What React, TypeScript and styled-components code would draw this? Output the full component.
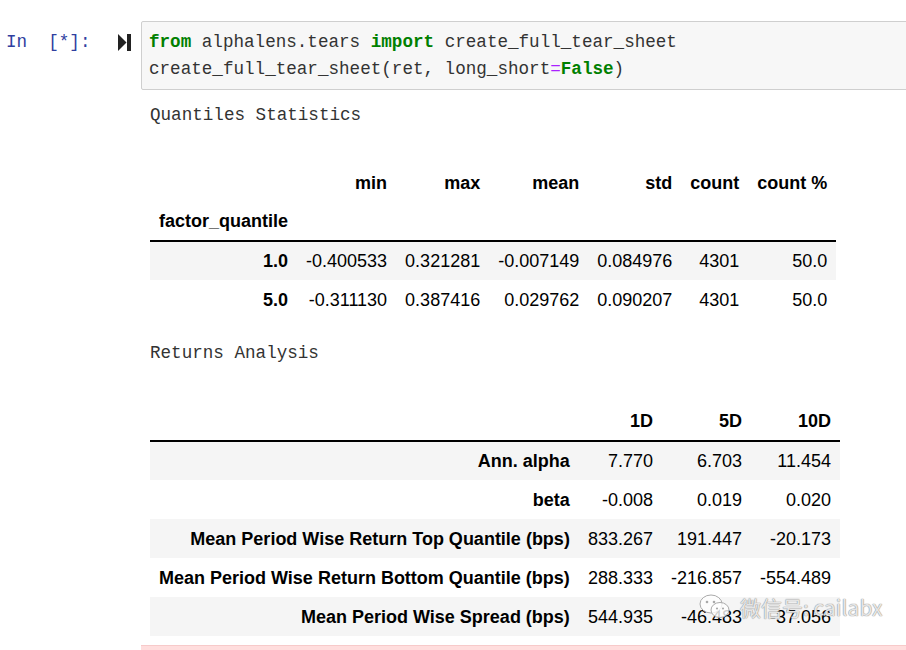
import React from "react";
import styled, { createGlobalStyle } from "styled-components";

const Global = createGlobalStyle`
  html, body { margin: 0; padding: 0; background: #fff; overflow: hidden; }
  body { width: 906px; height: 650px; }
`;

const mono = `"Liberation Mono", "DejaVu Sans Mono", monospace`;
const sans = `"Liberation Sans", Arial, sans-serif`;

const Notebook = styled.div`
  padding-top: 21px;
  display: flex;
  width: 906px;
  height: 629px;
  overflow: hidden;
`;

const PromptCol = styled.div`
  width: 141px;
  flex: none;
  box-sizing: border-box;
  padding: 8px 10px 0 6px;
  display: flex;
  justify-content: space-between;
  align-items: flex-start;
`;

const PromptText = styled.span`
  font-family: ${mono};
  font-size: 17.6px;
  line-height: 27px;
  color: #303f9f;
  white-space: pre;
`;

const RunIcon = styled.svg`
  margin-top: 5px;
  display: block;
`;

const InnerCell = styled.div`
  flex: 1;
  display: flex;
  flex-direction: column;
  min-width: 0;
`;

const CodeBox = styled.div`
  width: 790px;
  box-sizing: border-box;
  border: 1px solid #cfcfcf;
  border-radius: 2px;
  background: #f7f7f7;
  padding: 7px 7px 6px 7px;
  font-family: ${mono};
  font-size: 17.6px;
  line-height: 27px;
  color: #333;
  white-space: pre;
`;

const Kw = styled.span`
  color: #008000;
  font-weight: bold;
`;

const Op = styled.span`
  color: #aa22ff;
`;

const Output = styled.div`
  position: relative;
  padding: 12px 0 0 9px;
`;

const Heading = styled.div<{ $gap: number }>`
  font-family: ${mono};
  font-size: 17.6px;
  line-height: 27px;
  color: #333;
  white-space: pre;
  margin-bottom: ${(p) => p.$gap}px;
`;

const Table = styled.table<{ $after?: number }>`
  border-collapse: collapse;
  border-spacing: 0;
  font-family: ${sans};
  font-size: 18px;
  color: #000;
  margin-bottom: ${(p) => p.$after ?? 0}px;

  th, td {
    height: 39px;
    padding: 0 9px;
    text-align: right;
    vertical-align: middle;
    white-space: nowrap;
    box-sizing: border-box;
    line-height: 18px;
  }
  th { font-weight: bold; }
  td { font-weight: normal; }
  thead tr:last-child th { border-bottom: 2px solid #000; }
  tbody tr:nth-child(odd) { background: #f5f5f5; }
`;

const IndexNameCell = styled.th`
  && { text-align: left; }
`;

const ErrBlock = styled.div`
  margin-top: 9px;
  height: 40px;
  background: #fdd;
  border-top: 1px solid #f7caca;
`;

const Watermark = styled.div`
  position: absolute;
  left: 557px;
  top: 504px;
  display: flex;
  align-items: center;
  gap: 8px;
  pointer-events: none;
`;

const WatermarkText = styled.span`
  font-family: "Noto Sans CJK SC", ${sans};
  font-size: 21px;
  line-height: 24px;
  color: rgba(255, 255, 255, 0.8);
  text-shadow: 0 0 1px #8a8a8a, 0 0 1px #8a8a8a;
  white-space: pre;
`;

const quantRows = [
  ["1.0", "-0.400533", "0.321281", "-0.007149", "0.084976", "4301", "50.0"],
  ["5.0", "-0.311130", "0.387416", "0.029762", "0.090207", "4301", "50.0"],
];

const retRows = [
  ["Ann. alpha", "7.770", "6.703", "11.454"],
  ["beta", "-0.008", "0.019", "0.020"],
  ["Mean Period Wise Return Top Quantile (bps)", "833.267", "191.447", "-20.173"],
  ["Mean Period Wise Return Bottom Quantile (bps)", "288.333", "-216.857", "-554.489"],
  ["Mean Period Wise Spread (bps)", "544.935", "-46.483", "-37.056"],
];

function WeChatIcon() {
  return (
    <svg width="34" height="26" viewBox="0 0 34 26" fill="none">
      <ellipse cx="13" cy="10" rx="11" ry="9" fill="rgba(255,255,255,0.8)" stroke="#aaa" strokeWidth="1" />
      <circle cx="9" cy="8" r="1.3" fill="#aaa" />
      <circle cx="16" cy="8" r="1.3" fill="#aaa" />
      <ellipse cx="22" cy="16" rx="9" ry="7.5" fill="rgba(255,255,255,0.8)" stroke="#aaa" strokeWidth="1" />
      <circle cx="19" cy="14.5" r="1.1" fill="#aaa" />
      <circle cx="25" cy="14.5" r="1.1" fill="#aaa" />
    </svg>
  );
}

export default function App() {
  return (
    <>
      <Global />
      <Notebook>
        <PromptCol>
          <PromptText>{"In\u00a0\u00a0[*]:"}</PromptText>
          <RunIcon width="13" height="17" viewBox="0 0 13 17">
            <polygon points="0,0 8.5,8.5 0,17" fill="#222" />
            <rect x="9" y="0" width="4" height="17" fill="#222" />
          </RunIcon>
        </PromptCol>
        <InnerCell>
          <CodeBox>
            <Kw>from</Kw>{" alphalens.tears "}<Kw>import</Kw>{" create_full_tear_sheet\n"}
            {"create_full_tear_sheet(ret, long_short"}<Op>=</Op><Kw>False</Kw>{")"}
          </CodeBox>
          <Output>
            <Heading $gap={34}>Quantiles Statistics</Heading>
            <Table $after={21}>
              <thead>
                <tr>
                  <th></th>
                  <th>min</th>
                  <th>max</th>
                  <th>mean</th>
                  <th>std</th>
                  <th>count</th>
                  <th>count %</th>
                </tr>
                <tr>
                  <IndexNameCell>factor_quantile</IndexNameCell>
                  <th></th>
                  <th></th>
                  <th></th>
                  <th></th>
                  <th></th>
                  <th></th>
                </tr>
              </thead>
              <tbody>
                {quantRows.map((r) => (
                  <tr key={r[0]}>
                    <th>{r[0]}</th>
                    {r.slice(1).map((v, i) => (
                      <td key={i}>{v}</td>
                    ))}
                  </tr>
                ))}
              </tbody>
            </Table>
            <Heading $gap={35}>Returns Analysis</Heading>
            <Table>
              <thead>
                <tr>
                  <th></th>
                  <th>1D</th>
                  <th>5D</th>
                  <th>10D</th>
                </tr>
              </thead>
              <tbody>
                {retRows.map((r) => (
                  <tr key={r[0]}>
                    <th>{r[0]}</th>
                    {r.slice(1).map((v, i) => (
                      <td key={i}>{v}</td>
                    ))}
                  </tr>
                ))}
              </tbody>
            </Table>
            <Watermark>
              <WeChatIcon />
              <WatermarkText>{"微信号: cailabx"}</WatermarkText>
            </Watermark>
          </Output>
          <ErrBlock />
        </InnerCell>
      </Notebook>
    </>
  );
}
